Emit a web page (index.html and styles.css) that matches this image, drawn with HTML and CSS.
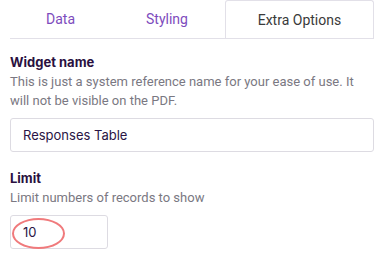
FILE: index.html
```html
<!DOCTYPE html>
<html lang="en">
<head>
    <meta charset="UTF-8">
    <meta name="viewport" content="width=device-width, initial-scale=1.0">
    <title>Widget Options</title>
    <link rel="stylesheet" href="styles.css">
</head>
<body>

    <div class="panel">
        <div class="tabs">
            <div class="tab">Data</div>
            <div class="tab">Styling</div>
            <div class="tab active">Extra Options</div>
        </div>

        <div class="field">
            <label class="field-label" for="widgetName">Widget name</label>
            <p class="field-help">This is just a system reference name for your ease of use. It will not be visible on the PDF.</p>
            <input type="text" id="widgetName" class="text-input" value="Responses Table">
        </div>

        <div class="field">
            <label class="field-label" for="limit">Limit</label>
            <p class="field-help">Limit numbers of records to show</p>
            <div class="limit-wrap">
                <input type="text" id="limit" class="text-input small" value="10">
                <span class="highlight"></span>
            </div>
        </div>
    </div>

</body>
</html>
```

FILE: styles.css
```css
body {
    margin: 0;
    background-color: #fff;
    font-family: Inter, 'Noto Sans', sans-serif;
    color: #2a1545;
}

.panel {
    padding: 0 5px 0 10px;
}

.tabs {
    display: flex;
    height: 38px;
    border-bottom: 1px solid #e2e0e8;
}

.tab {
    padding: 0 36px;
    font-family: Roboto, sans-serif;
    font-size: 14px;
    line-height: 38px;
    color: #7d4bbd;
    text-align: center;
}

.tab:nth-child(2) {
    padding: 0 37px 0 35px;
}

.tab.active {
    color: #3a3a3a;
    background-color: #fff;
    border: 1px solid #e2e0e8;
    border-bottom: none;
    border-radius: 3px 3px 0 0;
    height: 38px;
    margin-bottom: -1px;
    box-sizing: border-box;
    width: 151px;
    padding: 0;
}

.field {
    margin-top: 15px;
}

.field + .field {
    margin-top: 18px;
}

.field-label {
    display: block;
    font-size: 13px;
    font-weight: 700;
    line-height: 16px;
    color: #2a1040;
}

.field-help {
    margin: 2px 0 8px;
    font-family: Roboto, sans-serif;
    font-size: 13px;
    line-height: 19px;
    color: #7a7882;
}

.text-input {
    display: block;
    width: 100%;
    height: 34px;
    box-sizing: border-box;
    padding: 0 12px;
    border: 1px solid #dddbe2;
    border-radius: 3px;
    font-family: Inter, 'Noto Sans', sans-serif;
    font-size: 13px;
    color: #2a1545;
    background-color: #fff;
}

.limit-wrap {
    position: relative;
    width: 98px;
}

.text-input.small {
    width: 98px;
}

.highlight {
    position: absolute;
    left: 2px;
    top: 3px;
    width: 53px;
    height: 31px;
    border: 2px solid #f07a7c;
    border-radius: 50%;
    box-sizing: border-box;
    pointer-events: none;
}
```
